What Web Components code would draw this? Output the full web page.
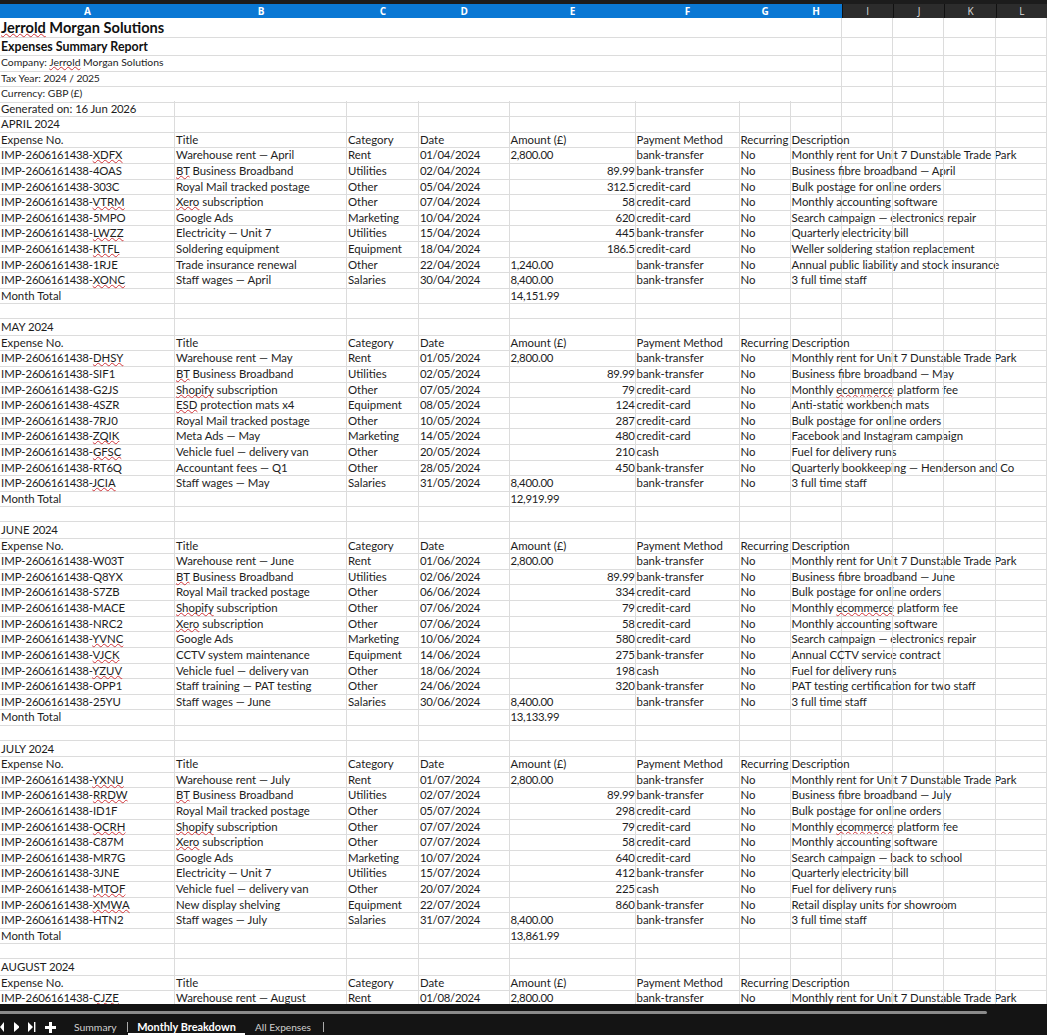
<!DOCTYPE html>
<html lang="en">
<head>
<meta charset="utf-8">
<title>Monthly Breakdown</title>
<style>
  html, body { margin: 0; height: 100%; background: #141414; overflow: hidden; }
</style>
</head>
<body>
<sheet-app></sheet-app>
<script>
const COLS = '175px 172px 72px 90.5px 126px 104px 51px 51px 51.3px 51.5px 51.3px 51.4px';

// ~word~ gets the spell check squiggle
const MONTHS = [
  ['APRIL 2024', '14,151.99', [
    'IMP-2606161438-~XDFX~|Warehouse rent — April|Rent|01/04/2024|2,800.00|bank-transfer|Monthly rent for Unit 7 Dunstable Trade Park',
    'IMP-2606161438-4OAS|~BT~ Business Broadband|Utilities|02/04/2024|89.99|bank-transfer|Business fibre broadband — April',
    'IMP-2606161438-303C|Royal Mail tracked postage|Other|05/04/2024|312.5|credit-card|Bulk postage for online orders',
    'IMP-2606161438-~VTRM~|~Xero~ subscription|Other|07/04/2024|58|credit-card|Monthly accounting software',
    'IMP-2606161438-5MPO|Google Ads|Marketing|10/04/2024|620|credit-card|Search campaign — electronics repair',
    'IMP-2606161438-~LWZZ~|Electricity — Unit 7|Utilities|15/04/2024|445|bank-transfer|Quarterly electricity bill',
    'IMP-2606161438-~KTFL~|Soldering equipment|Equipment|18/04/2024|186.5|credit-card|Weller soldering station replacement',
    'IMP-2606161438-1RJE|Trade insurance renewal|Other|22/04/2024|1,240.00|bank-transfer|Annual public liability and stock insurance',
    'IMP-2606161438-~XONC~|Staff wages — April|Salaries|30/04/2024|8,400.00|bank-transfer|3 full time staff',
  ]],
  ['MAY 2024', '12,919.99', [
    'IMP-2606161438-~DHSY~|Warehouse rent — May|Rent|01/05/2024|2,800.00|bank-transfer|Monthly rent for Unit 7 Dunstable Trade Park',
    'IMP-2606161438-SIF1|~BT~ Business Broadband|Utilities|02/05/2024|89.99|bank-transfer|Business fibre broadband — May',
    'IMP-2606161438-G2JS|~Shopify~ subscription|Other|07/05/2024|79|credit-card|Monthly ~ecommerce~ platform fee',
    'IMP-2606161438-4SZR|~ESD~ protection mats x4|Equipment|08/05/2024|124|credit-card|Anti-static workbench mats',
    'IMP-2606161438-7RJ0|Royal Mail tracked postage|Other|10/05/2024|287|credit-card|Bulk postage for online orders',
    'IMP-2606161438-~ZQIK~|Meta Ads — May|Marketing|14/05/2024|480|credit-card|Facebook and Instagram campaign',
    'IMP-2606161438-~GFSC~|Vehicle fuel — delivery van|Other|20/05/2024|210|cash|Fuel for delivery runs',
    'IMP-2606161438-RT6Q|Accountant fees — Q1|Other|28/05/2024|450|bank-transfer|Quarterly bookkeeping — Henderson and Co',
    'IMP-2606161438-~JCIA~|Staff wages — May|Salaries|31/05/2024|8,400.00|bank-transfer|3 full time staff',
  ]],
  ['JUNE 2024', '13,133.99', [
    'IMP-2606161438-W03T|Warehouse rent — June|Rent|01/06/2024|2,800.00|bank-transfer|Monthly rent for Unit 7 Dunstable Trade Park',
    'IMP-2606161438-Q8YX|~BT~ Business Broadband|Utilities|02/06/2024|89.99|bank-transfer|Business fibre broadband — June',
    'IMP-2606161438-S7ZB|Royal Mail tracked postage|Other|06/06/2024|334|credit-card|Bulk postage for online orders',
    'IMP-2606161438-MACE|~Shopify~ subscription|Other|07/06/2024|79|credit-card|Monthly ~ecommerce~ platform fee',
    'IMP-2606161438-NRC2|~Xero~ subscription|Other|07/06/2024|58|credit-card|Monthly accounting software',
    'IMP-2606161438-~YVNC~|Google Ads|Marketing|10/06/2024|580|credit-card|Search campaign — electronics repair',
    'IMP-2606161438-~VJCK~|CCTV system maintenance|Equipment|14/06/2024|275|bank-transfer|Annual CCTV service contract',
    'IMP-2606161438-~YZUV~|Vehicle fuel — delivery van|Other|18/06/2024|198|cash|Fuel for delivery runs',
    'IMP-2606161438-OPP1|Staff training — PAT testing|Other|24/06/2024|320|bank-transfer|PAT testing certification for two staff',
    'IMP-2606161438-25YU|Staff wages — June|Salaries|30/06/2024|8,400.00|bank-transfer|3 full time staff',
  ]],
  ['JULY 2024', '13,861.99', [
    'IMP-2606161438-~YXNU~|Warehouse rent — July|Rent|01/07/2024|2,800.00|bank-transfer|Monthly rent for Unit 7 Dunstable Trade Park',
    'IMP-2606161438-~RRDW~|~BT~ Business Broadband|Utilities|02/07/2024|89.99|bank-transfer|Business fibre broadband — July',
    'IMP-2606161438-ID1F|Royal Mail tracked postage|Other|05/07/2024|298|credit-card|Bulk postage for online orders',
    'IMP-2606161438-~OCRH~|~Shopify~ subscription|Other|07/07/2024|79|credit-card|Monthly ~ecommerce~ platform fee',
    'IMP-2606161438-C87M|~Xero~ subscription|Other|07/07/2024|58|credit-card|Monthly accounting software',
    'IMP-2606161438-MR7G|Google Ads|Marketing|10/07/2024|640|credit-card|Search campaign — back to school',
    'IMP-2606161438-3JNE|Electricity — Unit 7|Utilities|15/07/2024|412|bank-transfer|Quarterly electricity bill',
    'IMP-2606161438-~MTOF~|Vehicle fuel — delivery van|Other|20/07/2024|225|cash|Fuel for delivery runs',
    'IMP-2606161438-~XMWA~|New display shelving|Equipment|22/07/2024|860|bank-transfer|Retail display units for showroom',
    'IMP-2606161438-HTN2|Staff wages — July|Salaries|31/07/2024|8,400.00|bank-transfer|3 full time staff',
  ]],
  ['AUGUST 2024', '', [
    'IMP-2606161438-~CJZE~|Warehouse rent — August|Rent|01/08/2024|2,800.00|bank-transfer|Monthly rent for Unit 7 Dunstable Trade Park',
  ]],
];

// Lato digits run wider than the sheet's font, so digit runs get tightened
function markup(text) {
  return text
    .replace(/\d[\d,./]*/g, '<span class="d">$&</span>')
    .replace(/~([^~]+)~/g, '<span class="sp">$1</span>');
}

class ColHeaders extends HTMLElement {
  constructor() {
    super();
    const letters = 'ABCDEFGHIJKL'.split('');
    this.attachShadow({ mode: 'open' }).innerHTML = `
      <style>
        :host { display: grid; grid-template-columns: ${COLS}; height: 14px; flex: none; }
        div { font: 700 10px/14px "Open Sans", sans-serif; text-align: center; color: #fff; background: #0a78d4; }
        .off { background: #2c2c2c; color: #ddd; font-weight: 400; border-left: 1px solid #111; }
      </style>
      ${letters.map((l, i) => `<div class="${i > 7 ? 'off' : ''}">${l}</div>`).join('')}
    `;
  }
}

class SheetRow extends HTMLElement {
  static css = new CSSStyleSheet();
  constructor() {
    super();
    this.attachShadow({ mode: 'open' });
    this.shadowRoot.adoptedStyleSheets = [SheetRow.css];
  }
  render(cells, height, merged, extra) {
    this.style.height = height + 'px';
    this.style.lineHeight = height + 'px';
    let html = '';
    if (merged) {
      html += `<div class="c wide ${extra || ''}">${markup(cells[0] || '')}</div>`;
      for (let i = 8; i < 12; i++) html += '<div class="c"></div>';
    } else {
      for (let i = 0; i < 12; i++) {
        const v = cells[i] || '';
        const right = i === 4 && v && /^[\d.]+$/.test(v);
        html += `<div class="c ${right ? 'r' : ''}">${markup(v)}</div>`;
      }
    }
    this.shadowRoot.innerHTML = html;
  }
}
SheetRow.css.replaceSync(`
  :host { display: grid; grid-template-columns: ${COLS}; box-sizing: border-box; color: #1d1d1d;
          font-family: Lato, "Liberation Sans", sans-serif; font-size: 11.4px; }
  .c { border-right: 1px solid #dcdcdc; border-bottom: 1px solid #dcdcdc; padding-left: 1px; white-space: nowrap;
       min-width: 0; box-sizing: border-box; height: 100%; }
  .wide { grid-column: span 8; }
  .r { text-align: right; padding-right: 0; }
  .title { font-size: 14.6px; font-weight: 700; color: #111; }
  .sub { font-size: 12.4px; font-weight: 700; color: #111; padding-top: 1px; }
  .small { font-size: 10.4px; padding-top: 1px; }
  .d { letter-spacing: -0.3px; }
  .sp { text-decoration: underline wavy #d0343a 0.7px; text-underline-offset: 0; text-decoration-skip-ink: none; }
`);
customElements.define('sheet-row', SheetRow);

class SheetGrid extends HTMLElement {
  constructor() {
    super();
    const root = this.attachShadow({ mode: 'open' });
    root.innerHTML = `<style>
      :host { display: block; flex: none; height: 986px; overflow: hidden; background: #fff; }
    </style>`;
    const H = 15.615;
    const add = (cells, h, merged, extra) => {
      const row = document.createElement('sheet-row');
      row.render(cells, h || H, merged, extra);
      root.appendChild(row);
    };
    add(['~Jerrold~ Morgan Solutions'], 19, true, 'title');
    add(['Expenses Summary Report'], 17, true, 'sub');
    add(['Company: ~Jerrold~ Morgan Solutions'], 15.6, true, 'small');
    add(['Tax Year: 2024 / 2025'], 15.6, true, 'small');
    add(['Currency: GBP (£)'], 15.6, true, 'small');
    add(['Generated on: 16 Jun 2026'], 15.4);
    MONTHS.forEach(([name, total, items], m) => {
      add([name]);
      add(['Expense No.', 'Title', 'Category', 'Date', 'Amount (£)', 'Payment Method', 'Recurring', 'Description']);
      items.forEach(line => {
        const p = line.split('|');
        add([p[0], p[1], p[2], p[3], p[4], p[5], 'No', p[6]]);
      });
      if (m < MONTHS.length - 1) {
        add(['Month Total', '', '', '', total]);
        add([]);
      }
    });
  }
}

class SheetTabs extends HTMLElement {
  constructor() {
    super();
    this.attachShadow({ mode: 'open' }).innerHTML = `
      <style>
        :host { display: block; flex: 1; min-height: 0; background: #141414; color: #cfcfcf;
                font: 10.4px "Lato", sans-serif; }
        .track { height: 3px; width: 987px; margin-top: 7px; background: #8a8a8a; border-radius: 0 2px 2px 0; }
        .bar { display: flex; align-items: stretch; height: 21px; }
        .nav { display: flex; align-items: center; gap: 9px; width: 74px; flex: none; padding-top: 5px; box-sizing: border-box; }
        svg { display: block; fill: #fff; flex: none; }
        .tab { display: flex; align-items: center; white-space: nowrap; padding-top: 5px; box-sizing: border-box; }
        .sep { width: 1px; height: 10px; background: #aaa; align-self: center; margin-top: 5px; }
        .on { width: 117px; justify-content: center; font-weight: 700; color: #fff; font-size: 10.9px;
              border-bottom: 2px solid #fff; padding-top: 6px; }
        .all { width: 78px; justify-content: flex-end; padding-right: 12px; letter-spacing: -0.02px; font-size: 10.2px; }
      </style>
      <div class="track"></div>
      <div class="bar">
        <div class="nav">
          <svg width="4" height="10" viewBox="0 0 4 10"><path d="M4 0v10L0 5z"/></svg>
          <svg width="6" height="10" viewBox="0 0 6 10"><path d="M0 0l6 5-6 5z" transform="translate(1)"/></svg>
          <svg width="8" height="10" viewBox="0 0 8 10"><path d="M0 0l5 5-5 5zM6 0h1.4v10H6z"/></svg>
          <svg width="11" height="11" viewBox="0 0 11 11"><path d="M4 0h3v4h4v3H7v4H4V7H0V4h4z"/></svg>
        </div>
        <div class="tab" style="width:53px">Summary</div>
        <div class="sep"></div>
        <div class="tab on">Monthly Breakdown</div>
        <div class="tab all">All Expenses</div>
        <div class="sep"></div>
      </div>
    `;
  }
}

class SheetApp extends HTMLElement {
  constructor() {
    super();
    this.attachShadow({ mode: 'open' }).innerHTML = `
      <style>
        :host { display: flex; flex-direction: column; height: 1035px; overflow: hidden; background: #141414; }
        .top { height: 4px; flex: none; background: #1c1c1c; }
      </style>
      <div class="top"></div>
      <col-headers></col-headers>
      <sheet-grid></sheet-grid>
      <sheet-tabs></sheet-tabs>
    `;
  }
}

customElements.define('col-headers', ColHeaders);
customElements.define('sheet-grid', SheetGrid);
customElements.define('sheet-tabs', SheetTabs);
customElements.define('sheet-app', SheetApp);
</script>
</body>
</html>
